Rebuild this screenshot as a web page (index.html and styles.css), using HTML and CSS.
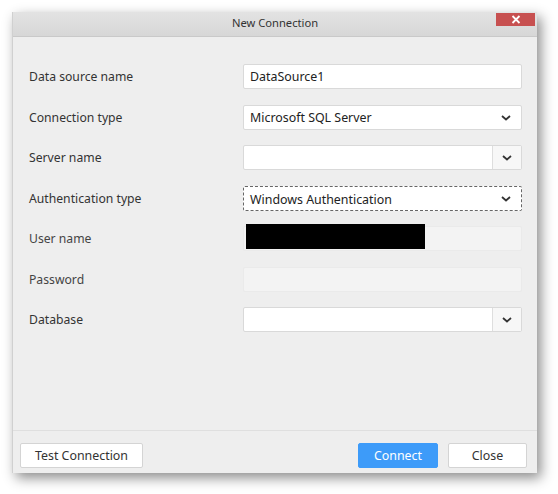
FILE: index.html
```html
<!DOCTYPE html>
<html>
<head>
<meta charset="utf-8">
<link rel="stylesheet" href="styles.css">
</head>
<body>
<div class="window">
  <div class="titlebar">
    <span class="title">New Connection</span>
    <div class="close-btn">
      <svg width="10" height="9" viewBox="0 0 10 9"><path d="M1.5 1 L8.5 8 M8.5 1 L1.5 8" stroke="#fff" stroke-width="1.8" fill="none"/></svg>
    </div>
  </div>
  <div class="content">
    <div class="row">
      <label class="lbl">Data source name</label>
      <div class="field"><span class="val">DataSource1</span></div>
    </div>
    <div class="row">
      <label class="lbl">Connection type</label>
      <div class="field"><span class="val">Microsoft SQL Server</span><span class="chev"><svg width="10" height="6" viewBox="0 0 10 6"><path d="M1 1 L5 4.5 L9 1" stroke="#333" stroke-width="1.8" fill="none"/></svg></span></div>
    </div>
    <div class="row">
      <label class="lbl">Server name</label>
      <div class="field combo"><span class="val"></span><span class="combo-btn"><svg width="10" height="6" viewBox="0 0 10 6"><path d="M1 1 L5 4.5 L9 1" stroke="#333" stroke-width="1.8" fill="none"/></svg></span></div>
    </div>
    <div class="row">
      <label class="lbl">Authentication type</label>
      <div class="field focused"><span class="val">Windows Authentication</span><span class="chev"><svg width="10" height="6" viewBox="0 0 10 6"><path d="M1 1 L5 4.5 L9 1" stroke="#333" stroke-width="1.8" fill="none"/></svg></span></div>
    </div>
    <div class="row">
      <label class="lbl dim">User name</label>
      <div class="field disabled"><span class="redact"></span></div>
    </div>
    <div class="row">
      <label class="lbl dim">Password</label>
      <div class="field disabled"></div>
    </div>
    <div class="row">
      <label class="lbl">Database</label>
      <div class="field combo"><span class="val"></span><span class="combo-btn"><svg width="10" height="6" viewBox="0 0 10 6"><path d="M1 1 L5 4.5 L9 1" stroke="#333" stroke-width="1.8" fill="none"/></svg></span></div>
    </div>
  </div>
  <div class="footer">
    <button class="btn">Test Connection</button>
    <div class="spacer"></div>
    <button class="btn primary">Connect</button>
    <button class="btn close">Close</button>
  </div>
</div>
</body>
</html>
```
FILE: styles.css
```css
html, body {
  margin: 0;
  padding: 0;
  background: #ffffff;
}
body {
  width: 558px;
  height: 494px;
  overflow: hidden;
  font-family: "Noto Sans", "Open Sans", sans-serif;
  color: #333;
}
.window {
  margin: 12px 0 0 12px;
  width: 525px;
  height: 461px;
  background: #eeeeee;
  box-shadow: 4px 5px 12px rgba(0,0,0,0.45);
  display: flex;
  flex-direction: column;
  box-sizing: border-box;
  border-left: 1px solid #d0d0d0;
}
.titlebar {
  position: relative;
  height: 25px;
  box-sizing: border-box;
  background: linear-gradient(#e3e3e3, #d7d7d7);
  border-bottom: 1px solid #c9c9c9;
  display: flex;
  align-items: center;
  justify-content: center;
}
.title {
  font-size: 11.2px;
  color: #333;
  margin-top: -3px;
}
.close-btn {
  position: absolute;
  top: 1px;
  right: 2px;
  width: 39px;
  height: 13px;
  background: #c75050;
  display: flex;
  align-items: center;
  justify-content: center;
}
.content {
  flex: 1;
  padding: 27px 15px 0 16px;
  display: flex;
  flex-direction: column;
  gap: 15.5px;
}
.row {
  display: flex;
  align-items: center;
  height: 25px;
}
.lbl {
  width: 214px;
  font-size: 12.2px;
  color: #333;
}
.lbl.dim {
  color: #444;
}
.field {
  flex: 1;
  height: 25px;
  box-sizing: border-box;
  background: #fff;
  border: 1px solid #d9d9d9;
  border-radius: 2px;
  display: flex;
  align-items: center;
  position: relative;
}
.val {
  flex: 1;
  padding-left: 6px;
  font-size: 12.4px;
  color: #222;
}
.chev {
  width: 30px;
  display: flex;
  justify-content: center;
  align-items: center;
  padding-top: 1px;
}
.combo-btn {
  width: 28px;
  height: 100%;
  border-left: 1px solid #dedede;
  background: #f7f7f7;
  display: flex;
  justify-content: center;
  align-items: center;
}
.focused {
  border: 1px dashed #666;
}
.focused .val {
  padding-top: 2px;
}
.disabled {
  background: #f3f3f3;
  border-color: #eaeaea;
}
.redact {
  position: absolute;
  left: 2px;
  top: -3px;
  width: 179px;
  height: 25px;
  background: #000;
}
.footer {
  height: 43px;
  box-sizing: border-box;
  border-top: 1px solid #dfdfdf;
  display: flex;
  align-items: flex-start;
  padding: 12px 10px 0 7px;
}
.spacer { flex: 1; }
.btn {
  height: 25px;
  box-sizing: border-box;
  background: #fff;
  border: 1px solid #d4d4d4;
  border-radius: 2px;
  font-family: "Noto Sans", "Open Sans", sans-serif;
  font-size: 12.4px;
  color: #333;
  padding: 0;
  width: 123px;
}
.btn.primary {
  width: 80px;
  background: #3d9bf9;
  border-color: #3d9bf9;
  color: #fff;
  margin-right: 10px;
}
.btn.close {
  width: 79px;
}
```
